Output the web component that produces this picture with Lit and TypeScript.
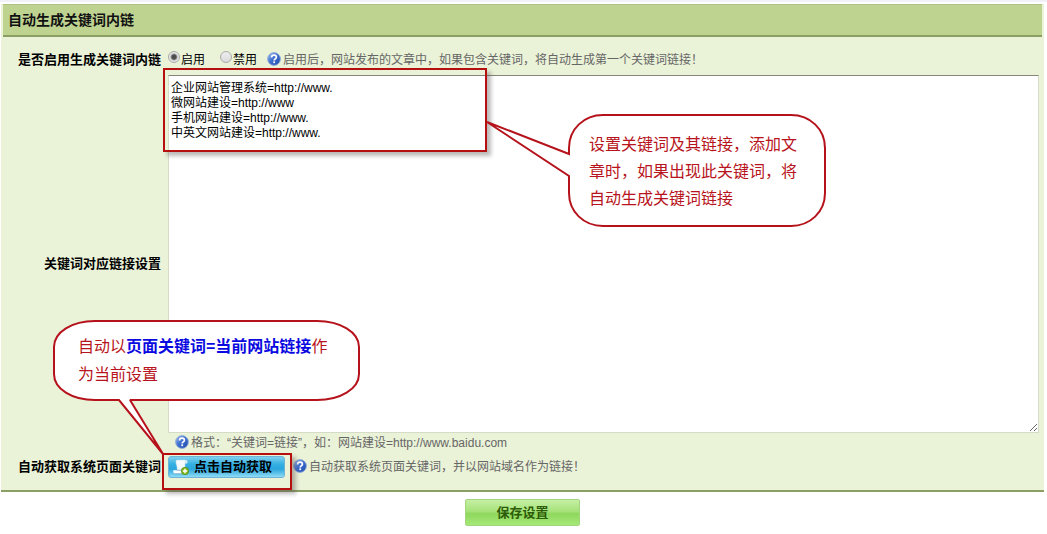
import { LitElement, html, css, svg } from "lit";
import { customElement, state } from "lit/decorators.js";

const DEFAULT_LINKS = [
  "企业网站管理系统=http://www.",
  "微网站建设=http://www",
  "手机网站建设=http://www.",
  "中英文网站建设=http://www.",
].join("\n");

@customElement("help-hint")
export class HelpHint extends LitElement {
  static styles = css`
    :host {
      display: flex;
      align-items: center;
      gap: 2px;
      color: #666;
      font-size: 12px;
      line-height: 18px;
    }
    .icon {
      flex: none;
      width: 14px;
      height: 14px;
      margin-bottom: 2px;
    }
  `;

  render() {
    return html`
      <svg class="icon" viewBox="0 0 14 14" aria-hidden="true">
        <defs>
          <linearGradient id="ball" x1="0" y1="0" x2="1" y2="1">
            <stop offset="0" stop-color="#a9c4f0" />
            <stop offset="0.450" stop-color="#3f70cf" />
            <stop offset="1" stop-color="#1c48ab" />
          </linearGradient>
        </defs>
        <circle cx="7" cy="7" r="6.4" fill="url(#ball)" stroke="#8fa9d8" stroke-width="0.9" />
        <path
          d="M4.6 5.4C4.6 3.9 5.6 3.2 7 3.2s2.4.8 2.4 2c0 1.600-2.200 1.700-2.200 3.200"
          fill="none"
          stroke="#fff"
          stroke-width="1.700"
        />
        <rect x="6.300" y="9.400" width="1.800" height="1.700" fill="#fff" />
      </svg>
      <span><slot></slot></span>
    `;
  }
}

@customElement("app-root")
export class AppRoot extends LitElement {
  @state() private enabled = true;
  @state() private links = DEFAULT_LINKS;

  static styles = css`
    :host {
      display: block;
      background: #fff;
      color: #000;
      font-family: "Liberation Sans", "Noto Sans CJK SC", sans-serif;
      font-size: 12px;
    }
    .page {
      position: relative;
      margin: 0;
      border-top: 2px solid #f1f1f8;
      padding: 2px 3px 8px 1px;
    }
    .panel {
      background: #eaf2d8;
      border-bottom: 2px solid #8b9f65;
    }
    .title {
      box-sizing: border-box;
      height: 33px;
      margin: 0 2px;
      padding: 0 5px;
      border-top: 1px solid #b1c285;
      border-bottom: 2px solid #8b9f65;
      background: #bfd391;
      color: #111;
      font-size: 14px;
      font-weight: 700;
      line-height: 30px;
    }
    .form {
      display: grid;
      grid-template-columns: 160px 1fr;
      column-gap: 7px;
      padding: 8px 5px 8px 0;
    }
    .label {
      align-self: center;
      text-align: right;
      white-space: nowrap;
      font-size: 13px;
      font-weight: 700;
      line-height: 18px;
    }
    .line {
      display: flex;
      align-items: center;
      height: 30px;
    }
    .options {
      display: flex;
      gap: 15px;
      margin-right: 10px;
    }
    .option {
      display: flex;
      align-items: center;
      line-height: 18px;
    }
    .radio {
      appearance: none;
      box-sizing: border-box;
      width: 12px;
      height: 12px;
      margin: 0 1px 6px 0;
      border: 1px solid #ababab;
      border-radius: 50%;
      background: linear-gradient(#eee, #dcdcdc);
    }
    .radio:checked {
      background: radial-gradient(circle, #4c4c4c 0 2px, #e6e6e6 4px);
    }
    .links {
      display: block;
      box-sizing: border-box;
      width: 100%;
      height: 358px;
      margin: 0;
      padding: 5px 2px;
      border: 1px solid #d5dbc6;
      border-top-color: #85857a;
      border-radius: 0;
      outline: none;
      background: #fff;
      color: #000;
      font: inherit;
      line-height: 15px;
    }
    .format {
      padding-left: 7px;
      height: 19px;
    }
    .fetch {
      display: flex;
      align-items: center;
      gap: 5px;
      height: 22px;
      margin: 0 8px 0 0;
      padding: 0 12px 0 4px;
      border: 1px solid #6fb4d6;
      border-radius: 3px;
      background: linear-gradient(#7fd0ee, #35b0e2 35%, #2ba5dd 60%, #8edcf5);
      color: #000;
      font: 700 13px/18px "Liberation Sans", "Noto Sans CJK SC", sans-serif;
      white-space: nowrap;
    }
    .fetch-icon {
      flex: none;
      width: 16px;
      height: 16px;
    }
    .actions {
      display: flex;
      justify-content: center;
      padding-top: 7px;
    }
    .save {
      width: 115px;
      height: 27px;
      padding: 0;
      border: 1px solid #a3d67c;
      border-radius: 2px;
      background: linear-gradient(#c6efa5, #a6e27a 45%, #8fd85e 55%, #a5e878);
      color: #2d5c08;
      font: 700 13px/18px "Liberation Sans", "Noto Sans CJK SC", sans-serif;
    }
    .mark {
      position: absolute;
      box-sizing: border-box;
      border: 2px solid #b50f0f;
      box-shadow: 4px 4px 4px rgba(90, 80, 80, 0.4);
      pointer-events: none;
    }
    .mark-links {
      left: 163px;
      top: 66px;
      width: 324px;
      height: 84px;
    }
    .mark-fetch {
      left: 162px;
      top: 451px;
      width: 130px;
      height: 37px;
    }
    .callout {
      position: absolute;
      box-sizing: border-box;
      pointer-events: none;
      color: #b81420;
      font-size: 16px;
    }
    .callout-links {
      left: 486px;
      top: 112px;
      width: 340px;
      padding: 17px 26px 15px 103px;
      line-height: 27px;
    }
    .callout-fetch {
      left: 52px;
      top: 317px;
      width: 308px;
      height: 138px;
      padding: 14px 26px 0;
      line-height: 28px;
    }
    .bubble {
      position: absolute;
      left: 0;
      top: 0;
    }
    .text {
      position: relative;
      margin: 0;
    }
    .strong {
      color: #0a0ae0;
      font-weight: 700;
    }
  `;

  private bubble(width: number, height: number, path: string) {
    return html`<svg class="bubble" width=${width} height=${height} aria-hidden="true">
      ${svg`<path d=${path} fill="#fff" stroke="#b5121b" stroke-width="2" stroke-linejoin="miter" stroke-miterlimit="2" />`}
    </svg>`;
  }

  private fetchKeywords() {
    this.links = DEFAULT_LINKS;
  }

  render() {
    return html`
      <main class="page">
        <section class="panel">
          <div class="title" role="heading" aria-level="1">自动生成关键词内链</div>
          <div class="form">
            <span class="label" id="enable-label">是否启用生成关键词内链</span>
            <div class="line">
              <div class="options" role="radiogroup" aria-labelledby="enable-label">
                <label class="option">
                  <input class="radio" type="radio" name="enable" value="1"
                    .checked=${this.enabled} @change=${() => (this.enabled = true)} />启用
                </label>
                <label class="option">
                  <input class="radio" type="radio" name="enable" value="0"
                    .checked=${!this.enabled} @change=${() => (this.enabled = false)} />禁用
                </label>
              </div>
              <help-hint>启用后，网站发布的文章中，如果包含关键词，将自动生成第一个关键词链接！</help-hint>
            </div>

            <label class="label" for="links">关键词对应链接设置</label>
            <div>
              <textarea class="links" id="links" spellcheck="false" .value=${this.links}
                @input=${(e: Event) => (this.links = (e.target as HTMLTextAreaElement).value)}></textarea>
              <help-hint class="format">格式：“关键词=链接”，如：网站建设=http://www.baidu.com</help-hint>
            </div>

            <label class="label" for="fetch">自动获取系统页面关键词</label>
            <div class="line">
              <button class="fetch" id="fetch" type="button" @click=${this.fetchKeywords}>
                <svg class="fetch-icon" viewBox="0 0 16 16" aria-hidden="true">
                  <path d="M3.500 1H13C12 2.500 12 3.500 12 5V12.500H3.500C4.500 10.500 4.200 9 3.800 7C3.400 5 2.200 3 3.500 1Z" fill="#f5fbff" stroke="#c3dce8" stroke-width=".5" />
                  <path d="M13 1C14.800 1 14.800 4 14 4.500H12C12 3 12 2 13 1Z" fill="#dcebf2" />
                  <path d="M.3 11.200H9.500C9 12.500 9.500 14.300 10.500 14.800H2.500C.8 14.800 0 12.800.3 11.200Z" fill="#fff" />
                  <path d="M1.500 14.800H10.500M3.500 11.200H8.500" stroke="#5fa3c0" stroke-width=".8" />
                  <circle cx="12" cy="12" r="3.700" fill="#86ba1c" stroke="#4f8a12" stroke-width=".7" />
                  <path d="M12 9.800V14.200M9.800 12H14.200" stroke="#fff" stroke-width="1.400" />
                </svg>
                点击自动获取
              </button>
              <help-hint>自动获取系统页面关键词，并以网站域名作为链接！</help-hint>
            </div>
          </div>
        </section>

        <div class="actions">
          <button class="save" type="button">保存设置</button>
        </div>

        <div class="mark mark-links"></div>
        <div class="mark mark-fetch"></div>

        <aside class="callout callout-links">
          ${this.bubble(
            340,
            115,
            "M1 8L83 40V34C83 15 98 1 117 1H305C324 1 339 15 339 34V79C339 98 324 112 305 112H117C98 112 83 98 83 79V62Z",
          )}
          <p class="text">设置关键词及其链接，添加文章时，如果出现此关键词，将自动生成关键词链接</p>
        </aside>
        <aside class="callout callout-fetch">
          ${this.bubble(
            308,
            138,
            "M111 135L67 81H43C20 81 2 70 2 55V28C2 13 20 2 43 2H265C288 2 307 13 307 28V55C307 70 288 81 265 81H78Z",
          )}
          <p class="text">自动以<span class="strong">页面关键词=当前网站链接</span>作为当前设置</p>
        </aside>
      </main>
    `;
  }
}
